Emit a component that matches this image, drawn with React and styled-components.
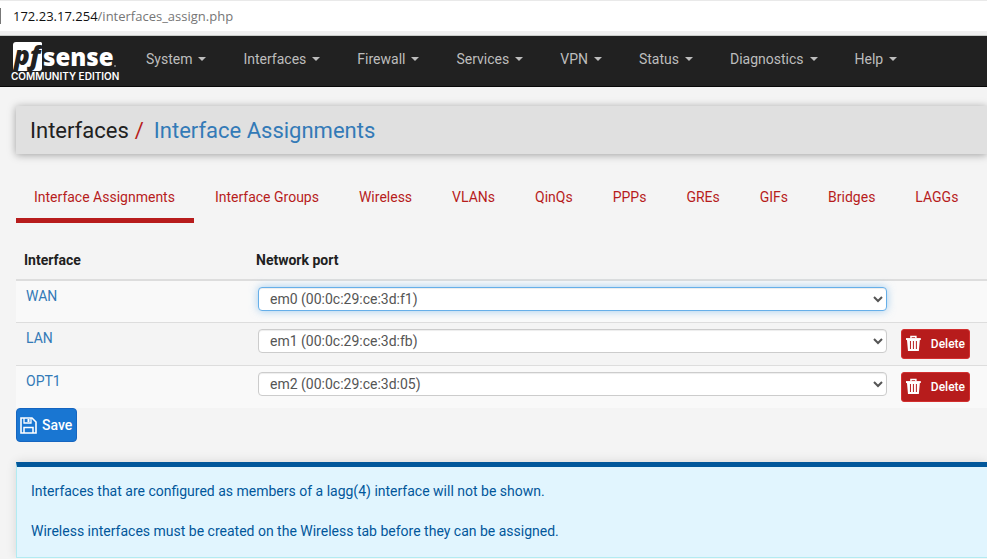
import React from "react";
import styled, { createGlobalStyle, css } from "styled-components";

const GlobalStyle = createGlobalStyle`
  *, *::before, *::after { box-sizing: border-box; }
  html { background: #f4f4f4; overflow: hidden; }
  body {
    margin: 0;
    background: #f4f4f4;
    color: #212121;
    font: 14px/20px Roboto, "Liberation Sans", sans-serif;
  }
  a { text-decoration: none; }
  button, select { font-family: inherit; }
`;

const AddressBar = styled.div`
  display: flex;
  align-items: center;
  height: 36px;
  padding: 0 0 4px;
  border-top: 1px solid #e9e9e9;
  border-bottom: 1px solid #c9ccc9;
  background: linear-gradient(#fff 30px, #f0f0f0 30px);
  font: 13px/18px "Open Sans", "Noto Sans", sans-serif;
  color: #767676;
`;

const Divider = styled.span`
  width: 1px;
  height: 16px;
  margin-right: 12px;
  background: #777;
`;

const Host = styled.span`
  color: #111;
`;

const Navbar = styled.nav`
  display: flex;
  align-items: center;
  height: 51px;
  padding-left: 8px;
  background: #212121;
  border-bottom: 1px solid #080808;
`;

const Brand = styled.a`
  display: block;
  flex: none;
  width: 118px;
  height: 50px;
`;

const NavItem = styled.button`
  display: flex;
  align-items: center;
  flex: none;
  gap: 6px;
  padding: 0 0 4px;
  margin: 0 17px 0 20px;
  border: 0;
  background: none;
  color: #bdbdbd;
  font-size: 14px;
  line-height: 20px;

  &::after {
    content: "";
    border-top: 4px solid;
    border-left: 4px solid transparent;
    border-right: 4px solid transparent;
  }
`;

const Main = styled.main`
  padding: 19px 0 0 16px;
`;

const Breadcrumb = styled.header`
  display: flex;
  align-items: center;
  height: 48px;
  padding: 2px 0 0 14px;
  background: #e0e0e0;
  box-shadow: 0 1px 8px rgba(0, 0, 0, 0.35);
  font-size: 22px;
  line-height: 28px;
`;

const Slash = styled.span`
  margin: 0 10px 0 6px;
  color: #b71c1c;
`;

const PageLink = styled.a`
  color: #337ab7;
`;

const Tabs = styled.nav`
  display: flex;
  margin-top: 23px;
`;

const Tab = styled.a`
  flex: none;
  padding: 10px 19px 11px 18px;
  margin-right: 3px;
  border-bottom: 5px solid ${(p) => (p.$active ? "#b71c1c" : "transparent")};
  color: #b71c1c;
`;

const Table = styled.table`
  width: 100%;
  margin-top: 17px;
  border-collapse: separate;
  border-spacing: 0;
  table-layout: fixed;
`;

const HeadCell = styled.th`
  width: ${(p) => p.$width || "auto"};
  height: 41px;
  padding: 0 8px;
  border-bottom: 2px solid #ddd;
  text-align: left;
  font-weight: 700;
`;

const Row = styled.tr`
  background: ${(p) => (p.$striped ? "#f9f9f9" : "transparent")};
`;

const Cell = styled.td`
  height: 42px;
  padding: 6px 4px 6px 10px;
  vertical-align: top;
  line-height: 18px;
  border-bottom: ${(p) => (p.$last ? "0" : "1px solid #ddd")};
`;

const InterfaceLink = styled.a`
  color: #337ab7;
`;

const PortSelect = styled.select`
  display: block;
  width: 100%;
  height: 24px;
  padding: 0 0 0 7px;
  border: 1px solid #ccc;
  border-radius: 4px;
  outline: 0;
  background: #fff;
  color: #555;
  font-size: 14px;
  line-height: 20px;
  box-shadow: inset 0 1px 1px rgba(0, 0, 0, 0.075);
  ${(p) =>
    p.$highlighted &&
    css`
      border-color: #66afe9;
      box-shadow: inset 0 1px 1px rgba(0, 0, 0, 0.075), 0 0 8px rgba(102, 175, 233, 0.6);
    `}
`;

const DeleteButton = styled.button`
  display: flex;
  align-items: center;
  gap: 10px;
  width: 69px;
  height: 30px;
  padding: 0 4px;
  border: 1px solid #d32f2f;
  border-radius: 3px;
  background: #b71c1c;
  color: #fff;
  font-size: 12px;
  font-weight: 500;
`;

const SaveButton = styled.button`
  display: flex;
  align-items: center;
  gap: 5px;
  height: 34px;
  padding: 0 4px 0 3px;
  border: 1px solid #1565c0;
  border-radius: 4px;
  background: #1976d2;
  color: #fff;
  font-size: 14px;
  font-weight: 500;
`;

const Notice = styled.section`
  margin-top: 20px;
  padding: 14px 14px 16px;
  border: 1px solid #b2ebf2;
  border-top: 5px solid #01579b;
  border-right: 0;
  background: #e1f5fe;
  color: #01579b;
  box-shadow: 0 0 10px rgba(0, 0, 0, 0.12);
`;

const NoticeText = styled.p`
  margin: 0;
  & + & {
    margin-top: 20px;
  }
`;

const Logo = () => (
  <svg width="117" height="50" viewBox="0 0 117 50" role="img" aria-label="pfsense community edition">
    <path d="M8 6H33L34 7V32Q34 35 31 35H8Q5 35 5 32V9Q5 6 8 6Z" fill="#fff" />
    <text x="6" y="29" fontFamily="Open Sans, sans-serif" fontWeight="800" fontStyle="italic" fontSize="26" fill="#212121">pf</text>
    <text x="35" y="30" fontFamily="Open Sans, sans-serif" fontWeight="800" fontSize="24" fill="#fff">sense</text>
    <circle cx="107" cy="30" r="1" fill="#888" />
    <text x="3" y="44" fontFamily="Inter, sans-serif" fontWeight="600" fontSize="10" fill="#fff">COMMUNITY EDITION</text>
  </svg>
);

const TrashIcon = () => (
  <svg width="15" height="18" viewBox="0 0 15 18" aria-hidden="true">
    <path d="M5 3V1.5H10V3" fill="none" stroke="#fff" strokeWidth="1.5" />
    <path d="M0 3H15V5H0Z" fill="#fff" />
    <path fillRule="evenodd" d="M1 5H14L13 16H2ZM4 6V14H5V6ZM7 6V14H8V6ZM10 6V14H11V6Z" fill="#fff" />
  </svg>
);

const SaveIcon = () => (
  <svg width="17" height="17" viewBox="0 0 17 17" fill="none" stroke="#fff" aria-hidden="true">
    <path d="M1 1H12L16 5V16H1Z" strokeWidth="1.6" />
    <path d="M4 1V6H11V1" strokeWidth="1.3" />
    <path d="M8.5 2V5" strokeWidth="2" />
    <path d="M4 16V10.5H13V16" strokeWidth="1.5" />
  </svg>
);

const menus = ["System", "Interfaces", "Firewall", "Services", "VPN", "Status", "Diagnostics", "Help"];
const tabs = ["Interface Assignments", "Interface Groups", "Wireless", "VLANs", "QinQs", "PPPs", "GREs", "GIFs", "Bridges", "LAGGs"];
const ports = ["em0 (00:0c:29:ce:3d:f1)", "em1 (00:0c:29:ce:3d:fb)", "em2 (00:0c:29:ce:3d:05)"];
const interfaces = ["WAN", "LAN", "OPT1"];

export default function App() {
  return (
    <>
      <GlobalStyle />
      <AddressBar>
        <Divider />
        <Host>172.23.17.254</Host>/interfaces_assign.php
      </AddressBar>
      <Navbar>
        <Brand href="#"><Logo /></Brand>
        {menus.map((name) => <NavItem key={name} type="button">{name}</NavItem>)}
      </Navbar>
      <Main>
        <Breadcrumb>
          Interfaces<Slash>/</Slash>
          <PageLink href="#">Interface Assignments</PageLink>
        </Breadcrumb>
        <Tabs>
          {tabs.map((name, i) => <Tab key={name} href="#" $active={i === 0}>{name}</Tab>)}
        </Tabs>
        <Table>
          <thead>
            <tr>
              <HeadCell $width="232px">Interface</HeadCell>
              <HeadCell>Network port</HeadCell>
              <HeadCell $width="96px" aria-label="Actions" />
            </tr>
          </thead>
          <tbody>
            {interfaces.map((name, i) => (
              <Row key={name} $striped={i % 2 === 0}>
                <Cell $last={i === 2}><InterfaceLink href="#">{name}</InterfaceLink></Cell>
                <Cell $last={i === 2}>
                  <PortSelect aria-label={`${name} network port`} defaultValue={ports[i]} $highlighted={i === 0}>
                    {ports.map((port) => <option key={port}>{port}</option>)}
                  </PortSelect>
                </Cell>
                <Cell $last={i === 2}>
                  {i > 0 && <DeleteButton type="button"><TrashIcon />Delete</DeleteButton>}
                </Cell>
              </Row>
            ))}
          </tbody>
        </Table>
        <SaveButton type="button"><SaveIcon />Save</SaveButton>
        <Notice>
          <NoticeText>Interfaces that are configured as members of a lagg(4) interface will not be shown.</NoticeText>
          <NoticeText>Wireless interfaces must be created on the Wireless tab before they can be assigned.</NoticeText>
        </Notice>
      </Main>
    </>
  );
}
